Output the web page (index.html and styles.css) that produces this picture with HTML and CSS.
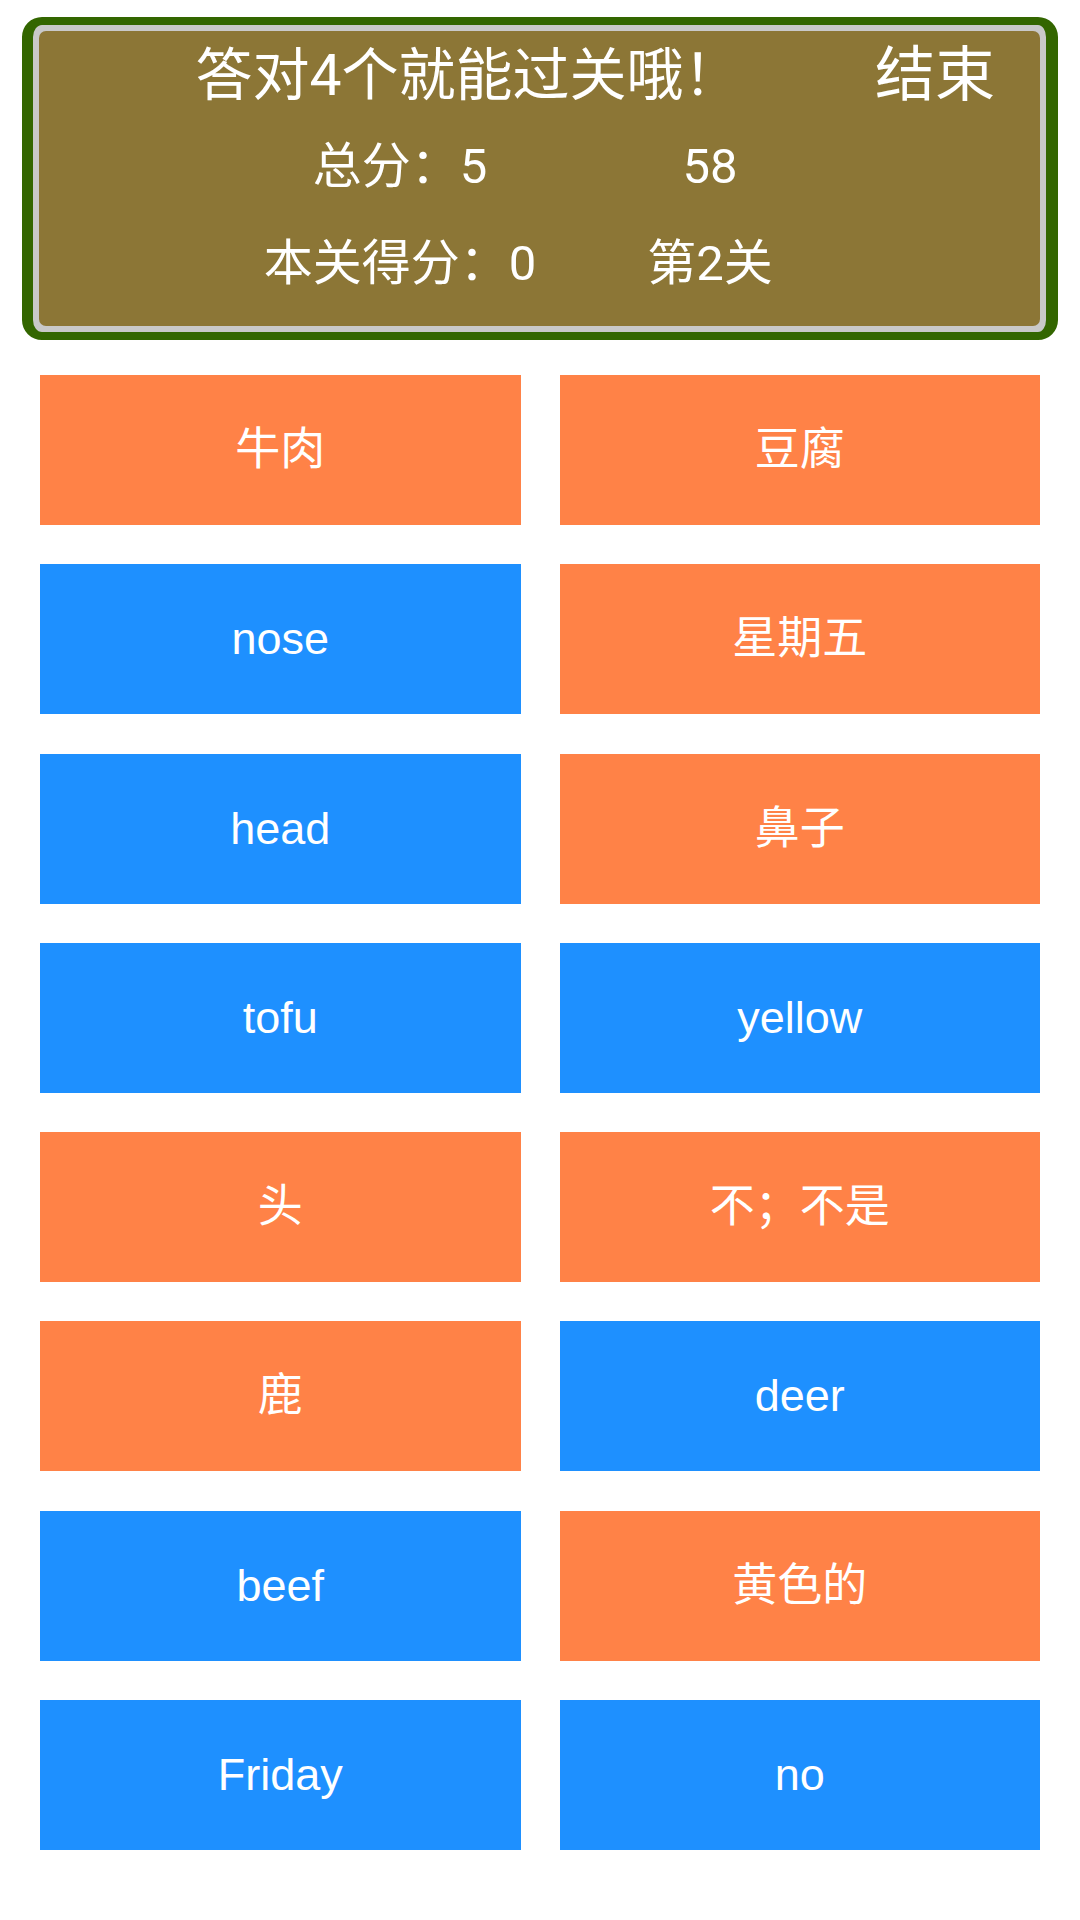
FILE: index.html
```html
<!DOCTYPE html>
<html lang="zh-CN">
<head>
    <meta charset="UTF-8">
    <meta name="viewport" content="width=device-width, initial-scale=1.0">
    <title>单词配对</title>
    <link rel="stylesheet" href="styles.css">
</head>
<body>

    <div class="board">
        <div class="panel">
            <div class="row row-title">
                <span class="tip">答对4个就能过关哦！</span>
                <span class="end">结束</span>
            </div>
            <div class="row row-info">
                <span class="cell-left">总分：5</span>
                <span class="cell-right">58</span>
            </div>
            <div class="row row-level">
                <span class="cell-left">本关得分：0</span>
                <span class="cell-right">第2关</span>
            </div>
        </div>
    </div>

    <section class="cards">
        <div class="card orange">牛肉</div>
        <div class="card orange">豆腐</div>
        <div class="card blue">nose</div>
        <div class="card orange">星期五</div>
        <div class="card blue">head</div>
        <div class="card orange">鼻子</div>
        <div class="card blue">tofu</div>
        <div class="card blue">yellow</div>
        <div class="card orange">头</div>
        <div class="card orange">不；不是</div>
        <div class="card orange">鹿</div>
        <div class="card blue">deer</div>
        <div class="card blue">beef</div>
        <div class="card orange">黄色的</div>
        <div class="card blue">Friday</div>
        <div class="card blue">no</div>
    </section>

</body>
</html>
```

FILE: styles.css
```css
/* Reset default styles */
* {
    margin: 0;
    padding: 0;
    box-sizing: border-box;
}

body {
    font-family: Roboto, "Noto Sans CJK SC", sans-serif;
    background-color: #ffffff;
    color: white;
}

/* Score board on top */
.board {
    margin: 17px 22px 0;
    border-style: solid;
    border-color: #336600;
    border-width: 8px 12px 8px 11px;
    border-radius: 20px;
    background-color: #c9c9c9;
    padding: 6px;
}

.panel {
    height: 295px;
    background-color: #8c7636;
    border-radius: 7px;
}

.row {
    display: flex;
    align-items: center;
    line-height: 1.2;
}

.row-title {
    height: 90px;
}

.row-info {
    height: 92px;
}

.row-level {
    height: 102px;
}

.tip {
    width: 600px;
    margin-left: 129px;
    text-align: center;
    font-size: 57px;
}

.end {
    width: 200px;
    margin-left: 67px;
    text-align: center;
    font-size: 60px;
}

.cell-left {
    width: 400px;
    margin-left: 161px;
    text-align: center;
    font-size: 49px;
}

.cell-right {
    width: 200px;
    margin-left: 10px;
    text-align: center;
    font-size: 49px;
}

/* Word cards */
.cards {
    display: grid;
    grid-template-columns: 1fr 1fr;
    column-gap: 39px;
    row-gap: 39.3px;
    padding: 0 40px;
    margin-top: 35px;
}

.card {
    height: 150px;
    display: flex;
    align-items: center;
    justify-content: center;
    font-family: "Liberation Sans", "Noto Sans CJK SC", sans-serif;
    font-size: 45px;
    line-height: 1.2;
    color: white;
}

.orange {
    background-color: #ff8247;
}

.blue {
    background-color: #1e90ff;
}
```
